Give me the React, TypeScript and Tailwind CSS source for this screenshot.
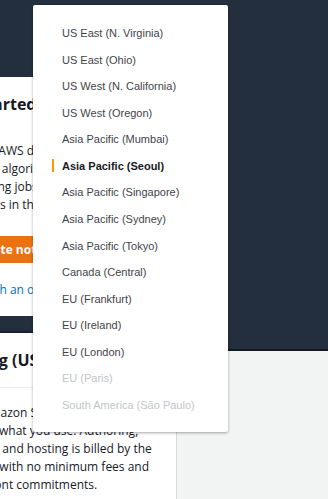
import React from "react";

const regions: { name: string; state?: "selected" | "disabled" }[] = [
  { name: "US East (N. Virginia)" },
  { name: "US East (Ohio)" },
  { name: "US West (N. California)" },
  { name: "US West (Oregon)" },
  { name: "Asia Pacific (Mumbai)" },
  { name: "Asia Pacific (Seoul)", state: "selected" },
  { name: "Asia Pacific (Singapore)" },
  { name: "Asia Pacific (Sydney)" },
  { name: "Asia Pacific (Tokyo)" },
  { name: "Canada (Central)" },
  { name: "EU (Frankfurt)" },
  { name: "EU (Ireland)" },
  { name: "EU (London)" },
  { name: "EU (Paris)", state: "disabled" },
  { name: "South America (São Paulo)", state: "disabled" },
];

function RegionMenu() {
  return (
    <div className="absolute left-[33px] top-[5px] w-[195px] rounded-[2px] bg-white pt-[15px] pb-[14px] shadow-[0_1px_3px_rgba(0,0,0,0.35)] font-['Liberation_Sans',Arial,sans-serif] text-[11px]">
      {regions.map((r) => (
        <div key={r.name} className="relative flex h-[26.57px] items-center pl-[29px]">
          {r.state === "selected" && (
            <span className="absolute left-[19px] top-[6.5px] h-[13px] w-[2px] bg-[#ff9900]" />
          )}
          <span
            className={
              r.state === "selected"
                ? "font-bold text-[#16191f]"
                : r.state === "disabled"
                  ? "text-[#c2c6c8]"
                  : "text-[#3f444b]"
            }
          >
            {r.name}
          </span>
        </div>
      ))}
    </div>
  );
}

export default function App() {
  return (
    <div className="relative h-[499px] w-[328px] overflow-hidden bg-[#f2f3f3] font-['Open_Sans',sans-serif] text-[#16191f]">
      <div className="flex">
        {/* left column, page is scrolled sideways so it starts off-screen */}
        <div className="-ml-[65px] w-[242px] shrink-0">
          <div className="border-b-2 border-[#18212d] bg-[#232f3e] pt-[77px] pb-[15px]">
            <div className="bg-white px-[18px] pt-[17px] pb-[17px]">
              <h2 className="-ml-[7px] text-[16px] font-bold leading-[20px]">Get started</h2>
              <p className="mt-[28px] text-[12px] leading-[18px]">
                Explore AWS data sets and built-in
                <br />
                learning algorithms, then start
                <br />
                or training jobs to build models
                <br />
                instances in the cloud.
              </p>
              <button
                type="button"
                className="mt-[22px] h-[27px] rounded-[2px] bg-[#ec7211] px-[20px] text-[12px] font-bold text-white"
              >
                Create notebook instance
              </button>
              <p className="mt-[18px] whitespace-nowrap text-[12px] leading-[18px] text-[#0073bb]">
                Start with an overview
              </p>
            </div>
          </div>
          <div className="h-[200px] border-r border-[#d5dbdb] bg-white">
            <div className="border-b border-[#eaeded] px-[18px] py-[17px]">
              <h2 className="whitespace-nowrap text-[16px] font-bold leading-[20px]">Pricing (US East)</h2>
            </div>
            <p className="px-[18px] pt-[16px] text-[12px] leading-[18px]">
              With Amazon SageMaker, you pay only for what you use. Authoring, training, and hosting is
              billed by the second, with no minimum fees and no upfront commitments.
            </p>
          </div>
        </div>
        <div className="flex-1">
          <div className="h-[351px] border-b-2 border-[#131a24] bg-[#232f3e]" />
        </div>
      </div>
      <RegionMenu />
    </div>
  );
}
